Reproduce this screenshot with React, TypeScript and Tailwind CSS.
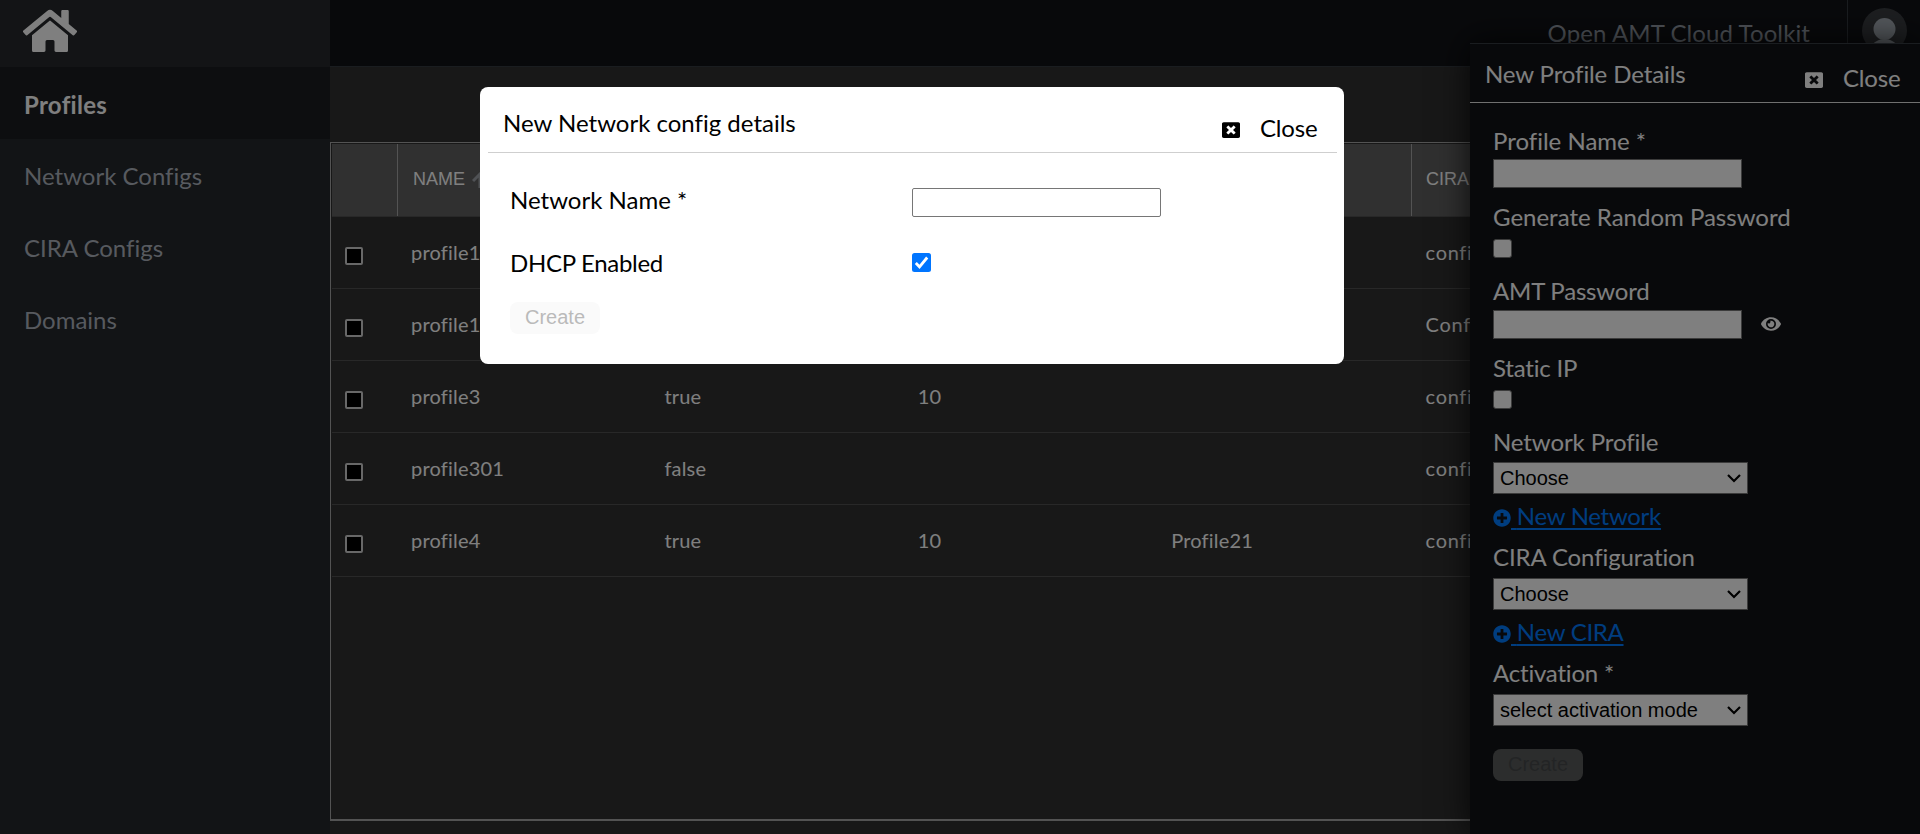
import React from "react";
import { FaHome, FaEye, FaPlusCircle, FaWindowClose } from "react-icons/fa";

function Nav({ label, active }: { label: string; active?: boolean }) {
  return (
    <a
      className={
        active
          ? "flex h-[72px] items-center bg-[#1a1d20] pl-6 pt-[3px] text-[24px] font-bold tracking-[0.3px] text-white"
          : "flex h-[72px] items-center pl-6 pt-[2px] text-[24px] text-[#aeb4be]"
      }
    >
      <span>{label}</span>
    </a>
  );
}

const rows = [
  ["profile1", "true", "10", "", "config1"],
  ["profile1", "true", "10", "", "Config1"],
  ["profile3", "true", "10", "", "config1"],
  ["profile301", "false", "", "", "config1"],
  ["profile4", "true", "10", "Profile21", "config1"],
];

function Chevron() {
  return (
    <svg width="14" height="9" viewBox="0 0 14 9" className="mr-[6px]" fill="none" stroke="#000" strokeWidth="2.2">
      <path d="M1 1l6 6 6-6" />
    </svg>
  );
}

function Select({ label }: { label: string }) {
  return (
    <div className="flex h-8 w-[255px] items-center justify-between border border-[#767676] bg-white pl-[6px] font-['Liberation_Sans',sans-serif] text-[20px] leading-none text-black">
      <span>{label}</span>
      <Chevron />
    </div>
  );
}

function Label({ children }: { children: React.ReactNode }) {
  return <div className="h-[29px] whitespace-nowrap text-[24px] leading-[27px] text-white">{children}</div>;
}

function Link({ children }: { children: React.ReactNode }) {
  return (
    <a className="flex h-[29px] items-start text-[24px] leading-[28px] tracking-[-0.3px] text-[#007bff]">
      <FaPlusCircle size={18} className="mt-[7px]" />
      <span className="whitespace-pre underline decoration-2 underline-offset-[3px]">{" "}{children}</span>
    </a>
  );
}

export default function App() {
  return (
    <div className="relative flex h-[834px] w-[1920px] overflow-hidden bg-[#303030] font-['Lato',sans-serif] [font-variant-ligatures:none]">
      <aside className="flex w-[330px] flex-none flex-col bg-[#24282c]">
        <div className="flex h-[67px] items-start bg-[#26292c] pl-[23px] pt-1">
          <FaHome size={54} className="text-white" />
        </div>
        <Nav label="Profiles" active />
        <Nav label="Network Configs" />
        <Nav label="CIRA Configs" />
        <Nav label="Domains" />
      </aside>

      <main className="flex min-w-0 flex-1 flex-col">
        <header className="flex h-[67px] flex-none justify-end border-b border-[#343a40] bg-[#111317]">
          <div className="mr-[37px] pt-[18px] text-[24px] leading-[29px] tracking-[0.1px] text-[#9da5b0]">Open AMT Cloud Toolkit</div>
          <div className="flex w-[73px] border-l border-[#343a40] pl-[14px] pt-2">
            <svg width="45" height="45" viewBox="0 0 45 45">
              <circle cx="22.5" cy="22.5" r="22.5" fill="#3a3d41" />
              <circle cx="22.5" cy="21" r="11" fill="#a8b0b8" />
              <path d="M9 39c2-5 8-8 13.500-8s11.500 3 13.500 8z" fill="#a8b0b8" />
            </svg>
          </div>
        </header>
        <section className="mt-[75px] flex h-[679px] w-[1588px] flex-none flex-col border-b-2 border-l border-t border-[#a6a6a6] pl-px pt-px">
          <div className="flex h-[73px] flex-none border-b border-[#505050] bg-[#606060] font-['Liberation_Sans',sans-serif] text-[18px] text-white">
            <div className="w-[65px] flex-none" />
            <div className="flex w-[1014px] flex-none items-center border-l border-[#a6a6a6] pb-[2px] pl-[15px]">
              NAME
              <svg width="16" height="16" viewBox="0 0 16 16" className="ml-[7px] mt-[2px]" fill="none" stroke="#a0a4aa" strokeWidth="3">
                <path d="M1 9L8 2 15 9M8 2v14" />
              </svg>
            </div>
            <div className="flex items-center border-l border-[#a6a6a6] pb-[2px] pl-[14px]">CIRA CONFIG</div>
          </div>
          {rows.map((r, i) => (
            <div key={i} className="flex h-[72px] flex-none items-center border-b border-[#505050] text-[20px] text-white">
              <div className="flex w-[79px] flex-none pl-[13px] pt-[7px]">
                <span className="size-[18px] rounded-[2px] border-2 border-[#d0d0d0] bg-black" />
              </div>
              {r.map((c, j) => (
                <div key={j} className="w-[253.4px] flex-none pb-[2px] tracking-[0.2px] last:pl-px last:tracking-[0.7px]">{c}</div>
              ))}
            </div>
          ))}
        </section>
      </main>

      <div className="absolute left-[1470px] top-[43px] h-[791px] w-[450px] border-t border-[#343a40] bg-[#111317] shadow-[0_0_32px_rgba(0,0,0,0.8)]">
        <div className="flex h-[59px] border-b border-[#e0e0e0] pl-[15px] text-[24px] leading-[29px] text-white">
          <div className="w-[320px] whitespace-nowrap pt-[15px] tracking-[-0.1px]">New Profile Details</div>
          <FaWindowClose size={18} className="mt-[27px]" />
          <div className="ml-5 pt-[19px] tracking-[-0.2px]">Close</div>
        </div>
        <div className="flex flex-col pl-[23px] pt-[24px]">
          <Label>Profile Name *</Label>
          <div className="mt-[3px] h-[29px] w-[249px] border border-[#767676] bg-white" />
          <div className="mt-[15px]"><Label>Generate Random Password</Label></div>
          <div className="mt-[7px] size-[19px] rounded-[3px] border border-[#767676] bg-white" />
          <div className="mt-[19px] tracking-[-0.2px]"><Label>AMT Password</Label></div>
          <div className="mt-[4px] flex items-center text-white">
            <div className="h-[29px] w-[249px] border border-[#767676] bg-white" />
            <FaEye size={20} className="mb-px ml-[19px]" />
          </div>
          <div className="mt-[15px] tracking-[-0.2px]"><Label>Static IP</Label></div>
          <div className="mt-[7px] size-[19px] rounded-[3px] border border-[#767676] bg-white" />
          <div className="mt-[19px] tracking-[-0.1px]"><Label>Network Profile</Label></div>
          <div className="mt-[5px]"><Select label="Choose" /></div>
          <div className="mt-[8px]"><Link>New Network</Link></div>
          <div className="mt-[12px] tracking-[-0.1px]"><Label>CIRA Configuration</Label></div>
          <div className="mt-[6px]"><Select label="Choose" /></div>
          <div className="mt-[8px]"><Link>New CIRA</Link></div>
          <div className="mt-[12px] tracking-[-0.2px]"><Label>Activation *</Label></div>
          <div className="mt-[6px]"><Select label="select activation mode" /></div>
          <div className="mt-[23px] flex h-8 w-[90px] items-center justify-center rounded-lg bg-[#595b5b] pb-[2px] font-['Liberation_Sans',sans-serif] text-[20px] text-[#46494a]">Create</div>
        </div>
      </div>

      <div className="absolute inset-0 bg-black/50" />

      <div className="absolute left-[480px] top-[87px] h-[277px] w-[864px] rounded-lg bg-white text-[24px] leading-[29px] text-black">
        <div className="ml-2 mr-[7px] flex h-[66px] border-b border-[#cfcfcf] pl-[15px]">
          <div className="w-[719px] whitespace-nowrap pt-[21px]">New Network config details</div>
          <FaWindowClose size={18} className="mt-[34px]" />
          <div className="ml-5 pt-[26px] tracking-[-0.2px]">Close</div>
        </div>
        <div className="flex pl-[30px] pt-[35px] leading-[23px]">
          <div className="w-[402px]">Network Name *</div>
          <div className="h-[29px] w-[249px] rounded-[2px] border border-[#767676]" />
        </div>
        <div className="flex h-[63px] pl-[30px] pt-[34px] leading-[23px]">
          <div className="w-[402px] tracking-[-0.3px]">DHCP Enabled</div>
          <svg width="19" height="19" viewBox="0 0 19 19" className="mt-[2px]">
            <rect width="19" height="19" rx="2.500" fill="#0075ff" />
            <path d="M3.800 10l3.700 3.800L15.200 4.500" fill="none" stroke="#fff" strokeWidth="2.800" />
          </svg>
        </div>
        <div className="ml-[30px] mt-[22px] flex h-8 w-[90px] items-center justify-center rounded-lg bg-[#fafafa] pb-[2px] font-['Liberation_Sans',sans-serif] text-[20px] text-[#bababa]">Create</div>
      </div>
    </div>
  );
}
